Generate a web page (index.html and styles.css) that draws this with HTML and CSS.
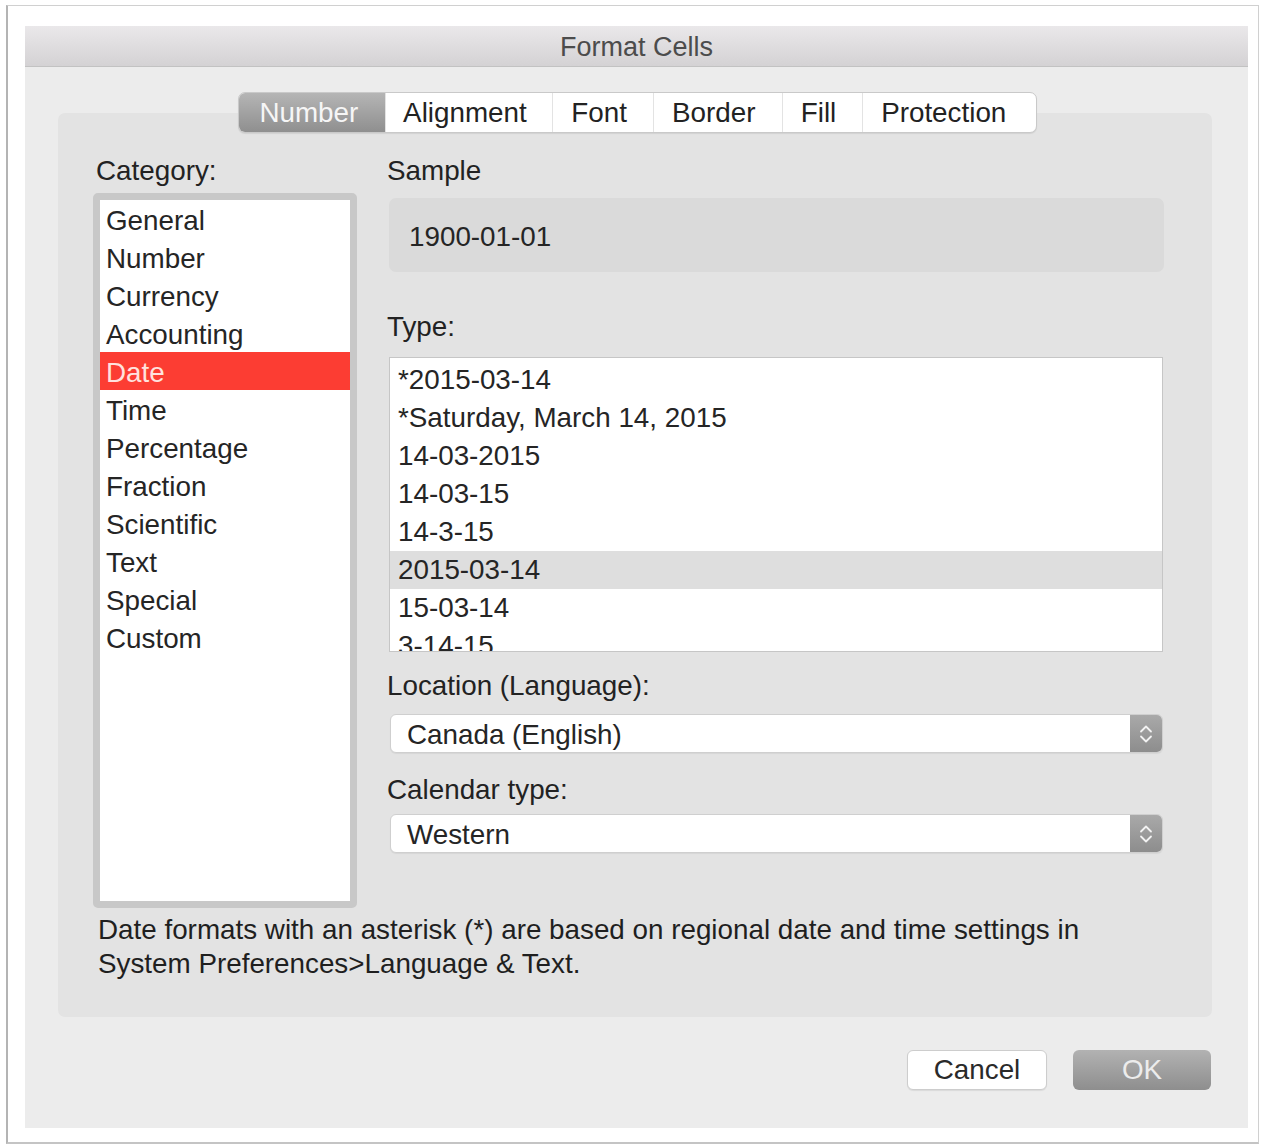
FILE: index.html
```html
<!DOCTYPE html>
<html lang="en">
<head>
<meta charset="utf-8">
<title>Format Cells</title>
<link rel="stylesheet" href="styles.css">
</head>
<body>
<div class="frame">
  <div class="window">
    <div class="titlebar">Format Cells</div>
    <div class="content">
      <div class="tabs">
        <div class="tab tab-number is-active">Number</div>
        <div class="tab tab-alignment">Alignment</div>
        <div class="tab tab-font">Font</div>
        <div class="tab tab-border">Border</div>
        <div class="tab tab-fill">Fill</div>
        <div class="tab tab-protection">Protection</div>
      </div>

      <div class="group">
        <div class="columns">
          <div class="col-left">
            <div class="label label-category">Category:</div>
            <ul class="category-list">
              <li>General</li>
              <li>Number</li>
              <li>Currency</li>
              <li>Accounting</li>
              <li class="is-selected">Date</li>
              <li>Time</li>
              <li>Percentage</li>
              <li>Fraction</li>
              <li>Scientific</li>
              <li>Text</li>
              <li>Special</li>
              <li>Custom</li>
            </ul>
          </div>

          <div class="col-right">
            <div class="label label-sample">Sample</div>
            <div class="sample-box">1900-01-01</div>

            <div class="label label-type">Type:</div>
            <ul class="type-list">
              <li>*2015-03-14</li>
              <li>*Saturday, March 14, 2015</li>
              <li>14-03-2015</li>
              <li>14-03-15</li>
              <li>14-3-15</li>
              <li class="is-selected">2015-03-14</li>
              <li>15-03-14</li>
              <li>3-14-15</li>
            </ul>

            <div class="label label-location">Location (Language):</div>
            <div class="popup">
              <span class="popup-value">Canada (English)</span>
              <span class="stepper">
                <svg width="16" height="24" viewBox="0 0 16 24" aria-hidden="true">
                  <path d="M3 9.5 L8 4.5 L13 9.5" />
                  <path d="M3 14.5 L8 19.5 L13 14.5" />
                </svg>
              </span>
            </div>

            <div class="label label-calendar">Calendar type:</div>
            <div class="popup">
              <span class="popup-value">Western</span>
              <span class="stepper">
                <svg width="16" height="24" viewBox="0 0 16 24" aria-hidden="true">
                  <path d="M3 9.5 L8 4.5 L13 9.5" />
                  <path d="M3 14.5 L8 19.5 L13 14.5" />
                </svg>
              </span>
            </div>
          </div>
        </div>

        <p class="note">Date formats with an asterisk (*) are based on regional date and time settings in<br>System Preferences&gt;Language &amp; Text.</p>
      </div>

      <div class="buttons">
        <div class="btn btn-cancel">Cancel</div>
        <div class="btn btn-ok">OK</div>
      </div>
    </div>
  </div>
</div>
</body>
</html>
```

FILE: styles.css
```css
* {
  box-sizing: border-box;
}

html,
body {
  margin: 0;
  padding: 0;
  background: #ffffff;
}

body {
  font-family: "Liberation Sans", Arial, Helvetica, sans-serif;
  font-size: 27.8px;
  color: #252525;
}

/* outer sheet around the dialog */
.frame {
  margin: 5px 0 0 6px;
  width: 1253px;
  height: 1139px;
  border: 1px solid #d0d0d0;
  border-left: 2px solid #b4b4b4;
  border-bottom: 2px solid #c4c4c4;
  padding: 20px 10px 0 17px;
  background: #ffffff;
}

.window {
  width: 1223px;
  height: 1102px;
  background: #ececec;
}

.titlebar {
  height: 41px;
  line-height: 43px;
  text-align: center;
  font-size: 27px;
  color: #4c4c4c;
  background: linear-gradient(#eae8ea, #d4d2d4);
  border-bottom: 1px solid #c2c2c2;
}

.content {
  padding-top: 25px;
}

/* segmented tab control */
.tabs {
  position: relative;
  z-index: 1;
  display: flex;
  width: 799px;
  height: 41px;
  margin: 0 auto;
  transform: translateX(1px);
  background: #ffffff;
  border: 1px solid #c9c9c9;
  border-radius: 7px;
  overflow: hidden;
  box-shadow: 0 1px 1px rgba(0, 0, 0, 0.08);
}

.tab {
  height: 100%;
  line-height: 40px;
  text-align: center;
  padding-right: 8px;
  color: #222222;
  border-left: 1px solid #e3e3e3;
}

.tab:first-child {
  border-left: none;
}

.tab.is-active {
  color: #f6f6f6;
  background: linear-gradient(#b5b5b5, #8f8f8f);
}

.tab-number { width: 146px; padding-right: 6px; }
.tab-alignment { width: 168px; }
.tab-font { width: 101px; }
.tab-border { width: 129px; }
.tab-fill { width: 81px; }
.tab-protection { width: 174px; padding-right: 12px; }

/* grouped content box */
.group {
  margin: -20px 36px 0 33px;
  padding: 42px 48px 36px 35px;
  background: #e3e3e3;
  border-radius: 7px;
}

.columns {
  display: flex;
  align-items: flex-start;
  gap: 32px;
}

.col-left {
  width: 264px;
  flex: none;
}

.col-right {
  width: 775px;
  flex: none;
}

.label {
  height: 32px;
  line-height: 32px;
  color: #222222;
}

.label-category {
  margin-left: 3px;
  margin-bottom: 6px;
}

.label-sample {
  margin-left: -2px;
  margin-bottom: 11px;
}

.label-type {
  margin-left: -2px;
  margin-top: 39px;
  margin-bottom: 14px;
}

.label-location {
  margin-left: -2px;
  margin-top: 18px;
  margin-bottom: 12px;
}

.label-calendar {
  margin-left: -2px;
  margin-top: 21px;
  margin-bottom: 8px;
}

/* category list */
.category-list {
  list-style: none;
  margin: 0;
  padding: 0;
  height: 715px;
  background: #ffffff;
  border: 7px solid #c8c8c8;
  border-radius: 5px;
}

.category-list li {
  height: 38px;
  line-height: 42px;
  padding-left: 6px;
  white-space: nowrap;
}

.category-list li.is-selected {
  background: #fc3d33;
  color: #ffe2de;
}

/* sample preview */
.sample-box {
  height: 74px;
  line-height: 78px;
  padding-left: 20px;
  background: #dadada;
  border-radius: 7px;
}

/* type list */
.type-list {
  list-style: none;
  margin: 0;
  padding: 3px 0 0;
  width: 774px;
  height: 295px;
  overflow: hidden;
  background: #ffffff;
  border: 1px solid #c6c6c6;
}

.type-list li {
  height: 38px;
  line-height: 38px;
  padding-left: 8px;
}

.type-list li.is-selected {
  background: #dedede;
}

/* popup buttons */
.popup {
  display: flex;
  width: 773px;
  height: 39px;
  margin-left: 1px;
  background: #ffffff;
  border: 1px solid #cfcfcf;
  border-radius: 6px;
  overflow: hidden;
  box-shadow: 0 1px 1px rgba(0, 0, 0, 0.06);
}

.popup-value {
  flex: 1;
  line-height: 39px;
  padding-left: 16px;
}

.stepper {
  width: 32px;
  display: flex;
  align-items: center;
  justify-content: center;
  background: linear-gradient(#a9a9a9, #8d8d8d);
}

.stepper svg path {
  fill: none;
  stroke: #f2f2f2;
  stroke-width: 1.8;
  stroke-linecap: round;
  stroke-linejoin: round;
}

.note {
  margin: 5px 0 0 5px;
  line-height: 34px;
  color: #1f1f1f;
  white-space: nowrap;
}

/* dialog buttons */
.buttons {
  display: flex;
  justify-content: flex-end;
  gap: 26px;
  margin: 33px 37px 0 0;
}

.btn {
  height: 40px;
  line-height: 40px;
  text-align: center;
  border-radius: 6px;
}

.btn-cancel {
  width: 140px;
  background: #ffffff;
  border: 1px solid #cdcdcd;
  box-shadow: 0 1px 1px rgba(0, 0, 0, 0.08);
  color: #2a2a2a;
  line-height: 38px;
}

.btn-ok {
  width: 138px;
  background: linear-gradient(#b2b2b2, #8e8e8e);
  color: #ececec;
}
```
